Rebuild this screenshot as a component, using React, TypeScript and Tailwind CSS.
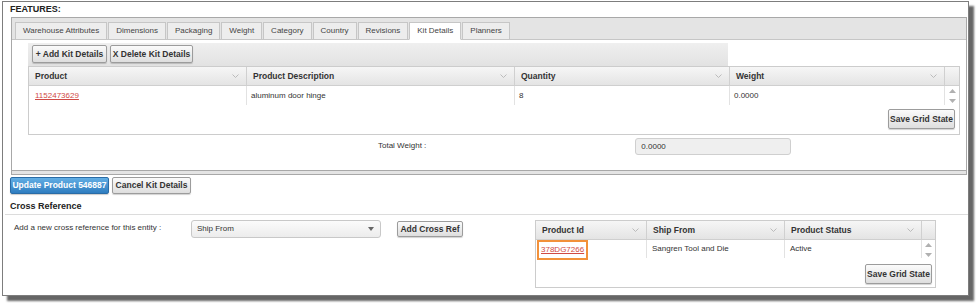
import React from "react";

const Chevron = () => (
  <svg width="7" height="4" viewBox="0 0 7 4" className="shrink-0">
    <polyline points="0.5,0.5 3.5,3.5 6.5,0.5" fill="none" stroke="#b5b5b5" strokeWidth="0.9" />
  </svg>
);

const ScrollArrows = () => (
  <div className="flex flex-col items-center gap-[6px] pt-[3px]">
    <svg width="7" height="4" viewBox="0 0 7 4">
      <polygon points="0,4 3.5,0 7,4" fill="#b0b0b0" />
    </svg>
    <svg width="7" height="4" viewBox="0 0 7 4">
      <polygon points="0,0 3.5,4 7,0" fill="#b0b0b0" />
    </svg>
  </div>
);

const GrayBtn = ({ children, className = "" }: { children: React.ReactNode; className?: string }) => (
  <div
    className={
      "flex items-center justify-center border border-[#9c9c9c] rounded-[2px] bg-linear-to-b from-[#fbfbfb] to-[#dedede] text-[8.5px] font-bold text-[#333] leading-none shadow-[0_1px_1px_rgba(0,0,0,0.18)] whitespace-nowrap " +
      className
    }
  >
    {children}
  </div>
);

const HeadCell = ({ label, w, last = false }: { label: string; w: string; last?: boolean }) => (
  <div className={"flex items-center justify-between pl-[6px] pr-[7px] border-r border-[#d0d0d0] " + w}>
    <span className="text-[8.5px] font-bold text-[#333]">{label}</span>
    {!last && <Chevron />}
  </div>
);

const tabs = [
  "Warehouse Attributes",
  "Dimensions",
  "Packaging",
  "Weight",
  "Category",
  "Country",
  "Revisions",
  "Kit Details",
  "Planners",
];

export default function App() {
  return (
    <div className="w-[977px] h-[303px] bg-white overflow-hidden font-['Liberation_Sans',Arial,sans-serif] text-[#333]">
      <div className="ml-[2px] mt-[1px] w-[967px] h-[295px] border border-[#7d7d7d] bg-white shadow-[5px_5px_2px_rgba(0,0,0,0.6)] flex flex-col">
        {/* FEATURES */}
        <div className="mt-[2px] pl-[7px] h-[11px] leading-[11px] text-[9px] font-bold text-[#222]">FEATURES:</div>

        {/* Tab container */}
        <div className="mt-[2px] ml-[8px] w-[956px] border border-[#a8a8a8] bg-[#e4e4e4] flex flex-col pb-[3px]">
          <div className="h-[22px] flex items-end pl-[3px] gap-[1px] border-b border-[#c6c6c6]">
            {tabs.map((t) => (
              <div
                key={t}
                className={
                  "h-[18px] -mb-px flex items-center px-[7px] border border-[#c6c6c6] text-[8px] text-[#444] whitespace-nowrap " +
                  (t === "Kit Details" ? "bg-white border-b-white" : "bg-[#ededed]")
                }
              >
                {t}
              </div>
            ))}
          </div>

          {/* Panel */}
          <div className="h-[131px] bg-white border-b border-[#a8a8a8] flex flex-col">
            {/* toolbar */}
            <div className="mt-[3px] ml-[16px] w-[700px] h-[23px] bg-linear-to-b from-[#efefef] to-[#e2e2e2] flex items-start pt-[2px] pl-[4px] gap-[3px]">
              <GrayBtn className="h-[18px] w-[75px]">+ Add Kit Details</GrayBtn>
              <GrayBtn className="h-[18px] w-[83px]">X Delete Kit Details</GrayBtn>
            </div>
            {/* grid */}
            <div className="ml-[16px] w-[932px] h-[69px] border border-[#cccccc] flex flex-col">
              <div className="h-[19px] flex bg-linear-to-b from-[#f6f6f6] to-[#e4e4e4] border-b border-[#cfcfcf]">
                <HeadCell label="Product" w="w-[218px]" />
                <HeadCell label="Product Description" w="w-[268px]" />
                <HeadCell label="Quantity" w="w-[215px]" />
                <HeadCell label="Weight" w="w-[215px]" />
                <div className="flex-1" />
              </div>
              <div className="h-[19px] flex text-[8px] text-[#333]">
                <div className="w-[218px] pl-[6px] flex items-center border-r border-[#e2e2e2]">
                  <span className="text-[#d04a45] underline">1152473629</span>
                </div>
                <div className="w-[268px] pl-[4px] flex items-center border-r border-[#e2e2e2]">aluminum door hinge</div>
                <div className="w-[215px] pl-[4px] flex items-center border-r border-[#e2e2e2]">8</div>
                <div className="w-[215px] pl-[4px] flex items-center border-r border-[#e2e2e2]">0.0000</div>
                <div className="flex-1 flex justify-center">
                  <ScrollArrows />
                </div>
              </div>
              <div className="flex-1 flex justify-end items-start pt-[4px] pr-[4px]">
                <GrayBtn className="h-[20px] w-[67px]">Save Grid State</GrayBtn>
              </div>
            </div>
            {/* total weight */}
            <div className="mt-[3px] flex items-start">
              <div className="ml-[366px] mt-[3px] text-[8px] leading-[10px] text-[#333]">Total Weight :</div>
              <div className="ml-[209px] w-[156px] h-[17px] bg-[#efefef] border border-[#cfcfcf] rounded-[3px] flex items-center pl-[5px] text-[8px] text-[#333]">
                0.0000
              </div>
            </div>
          </div>
        </div>

        {/* action buttons */}
        <div className="mt-[2px] ml-[7px] flex gap-[3px]">
          <div className="h-[17px] w-[99px] flex items-center justify-center rounded-[2px] border border-[#2a6ca6] bg-linear-to-b from-[#62aee4] to-[#2f7dc0] text-white text-[8.5px] font-bold whitespace-nowrap shadow-[0_1px_1px_rgba(0,0,0,0.2)]">
            Update Product 546887
          </div>
          <GrayBtn className="h-[17px] w-[79px]">Cancel Kit Details</GrayBtn>
        </div>

        {/* Cross Reference title */}
        <div className="mt-[7px] ml-[2px] w-[963px] h-[14px] border-b border-[#dcdcdc] pl-[5px] text-[9px] font-bold leading-[11px] text-[#222]">
          Cross Reference
        </div>

        {/* cross ref row */}
        <div className="mt-[5px] flex items-start">
          <div className="ml-[11px] w-[177px] mt-[3px] text-[8px] leading-[10px] text-[#333] whitespace-nowrap">
            Add a new cross reference for this entity :
          </div>
          <div className="w-[190px] h-[18px] border border-[#c8c8c8] rounded-[3px] bg-linear-to-b from-[#fbfbfb] to-[#ececec] flex items-center justify-between pl-[5px] pr-[6px] text-[8px] text-[#333]">
            <span>Ship From</span>
            <svg width="6" height="4" viewBox="0 0 6 4">
              <polygon points="0,0 3,4 6,0" fill="#666" />
            </svg>
          </div>
          <GrayBtn className="ml-[16px] mt-[1px] h-[16px] w-[66px]">Add Cross Ref</GrayBtn>
          <div className="ml-[72px] w-[401px] h-[68px] border border-[#cccccc] flex flex-col">
            <div className="h-[19px] flex bg-linear-to-b from-[#f6f6f6] to-[#e4e4e4] border-b border-[#cfcfcf]">
              <HeadCell label="Product Id" w="w-[111px]" />
              <HeadCell label="Ship From" w="w-[138px]" />
              <HeadCell label="Product Status" w="w-[137px]" />
              <div className="flex-1" />
            </div>
            <div className="h-[18px] flex text-[8px] text-[#333]">
              <div className="w-[111px] pl-[1px] flex items-start border-r border-[#e2e2e2]">
                <span className="h-[20px] border-2 border-[#f2913a] px-[2px] flex items-center bg-white relative">
                  <span className="text-[#d04a45] underline">378DG7266</span>
                </span>
              </div>
              <div className="w-[138px] pl-[5px] flex items-center border-r border-[#e2e2e2]">Sangren Tool and Die</div>
              <div className="w-[137px] pl-[5px] flex items-center border-r border-[#e2e2e2]">Active</div>
              <div className="flex-1 flex justify-center">
                <ScrollArrows />
              </div>
            </div>
            <div className="flex-1 flex justify-end items-start pt-[6px] pr-[3px]">
              <GrayBtn className="h-[20px] w-[67px]">Save Grid State</GrayBtn>
            </div>
          </div>
        </div>
      </div>
    </div>
  );
}
